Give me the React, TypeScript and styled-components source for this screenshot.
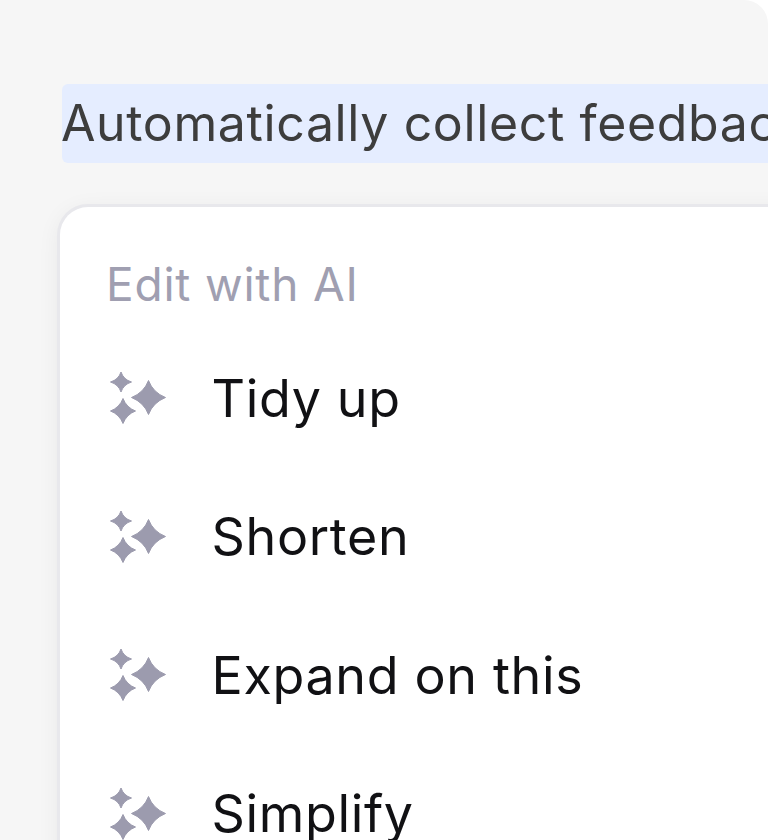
import * as React from 'react';
import styled, { createGlobalStyle } from 'styled-components';

const GlobalStyle = createGlobalStyle`
  html, body {
    margin: 0;
    padding: 0;
    background: #ffffff;
  }
  body {
    width: 768px;
    height: 840px;
    overflow: hidden;
    font-family: Inter, "Liberation Sans", sans-serif;
  }
`;

const Page = styled.div`
  width: 768px;
  height: 840px;
  overflow: hidden;
  box-sizing: border-box;
  padding: 84px 0 0 60px;
  background: #f6f6f6;
  border-top-right-radius: 24px;
`;

const SelectedLine = styled.div`
  width: 760px;
  height: 79px;
  margin-left: 2px;
  padding-right: 8px;
  border-radius: 6px;
  background: #e5edff;
  color: #3d3d3d;
  font-size: 50px;
  letter-spacing: 0.62px;
  line-height: 79px;
  text-indent: -1px;
  white-space: nowrap;
`;

const Menu = styled.div`
  width: 760px;
  height: 700px;
  margin-top: 44px;
  box-sizing: border-box;
  padding: 49px 0 0 46px;
  background: #ffffff;
  border-radius: 28px;
  box-shadow: 0 0 0 3px #e8e8ec, 0 4px 24px rgba(0, 0, 0, 0.07);
`;

const MenuTitle = styled.div`
  color: #a09fb1;
  font-size: 46px;
  letter-spacing: 0.8px;
  line-height: 56px;
  white-space: nowrap;
`;

const MenuList = styled.div`
  display: flex;
  flex-direction: column;
  gap: 50.67px;
  margin-top: 42px;
`;

const MenuRow = styled.div`
  display: flex;
  align-items: center;
  gap: 42.5px;
  height: 88px;
  color: #111114;
  font-size: 52px;
  letter-spacing: 0.65px;
  white-space: nowrap;
`;

const SparkleIcon = styled.svg`
  flex: none;
  margin-left: 3px;
  fill: #9c9bae;
  stroke: #9c9bae;
  stroke-width: 1;
  stroke-linejoin: round;
`;

const Sparkles = () => (
  <SparkleIcon width="60" height="54" viewBox="0 0 60 54" aria-hidden="true">
    <path d="M12 1 Q14.5 8.5 22.5 11 Q14.5 13.5 12 21 Q9.5 13.5 1.5 11 Q9.5 8.5 12 1 Z" />
    <path d="M39.5 9.5 Q44 21.5 56.5 26.5 Q44 31.5 39.5 43.5 Q35 31.5 22.5 26.5 Q35 21.5 39.5 9.5 Z" />
    <path d="M14 27.5 Q17.5 36.5 26.5 40 Q17.5 43.5 14 52.5 Q10.5 43.5 1.5 40 Q10.5 36.5 14 27.5 Z" />
  </SparkleIcon>
);

const items = ['Tidy up', 'Shorten', 'Expand on this', 'Simplify'];

const App: React.FunctionComponent = () => {
  return (
    <>
      <GlobalStyle />
      <Page>
        <SelectedLine>Automatically collect feedback from your users</SelectedLine>
        <Menu>
          <MenuTitle>Edit with AI</MenuTitle>
          <MenuList>
            {items.map((item) => (
              <MenuRow key={item}>
                <Sparkles />
                <span>{item}</span>
              </MenuRow>
            ))}
          </MenuList>
        </Menu>
      </Page>
    </>
  );
};

export default App;
